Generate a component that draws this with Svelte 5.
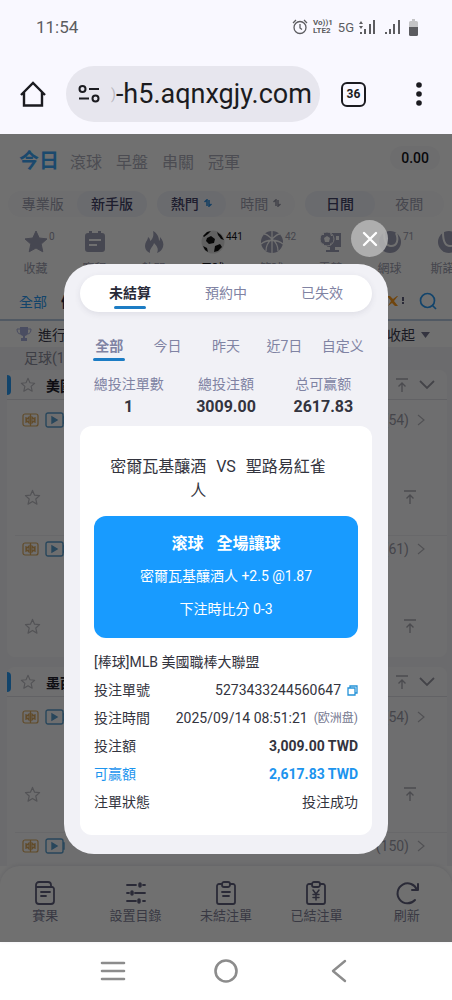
<script>
  const periods = ['今日', '滾球', '早盤', '串關', '冠軍'];
  const switches = [
    [{ text: '專業版' }, { text: '新手版', on: true }],
    [{ text: '熱門', on: true, sort: true }, { text: '時間', sort: true }],
    [{ text: '日間', on: true }, { text: '夜間' }],
  ];
  const sports = [
    { icon: 'star', label: '收藏', count: '0' },
    { icon: 'list', label: '賽程' },
    { icon: 'fire', label: '熱門' },
    { icon: 'soccer', label: '足球', count: '441', on: true },
    { icon: 'basket', label: '籃球', count: '42' },
    { icon: 'esport', label: '電競' },
    { icon: 'tennis', label: '網球', count: '71' },
    { icon: 'tennis', label: '斯諾克' },
  ];
  const leagues = [
    { name: '美國', matches: ['(54)', '(61)'] },
    { name: '墨西哥', matches: ['(54)', '(150)'] },
  ];
  const menu = [
    { icon: 'result', label: '賽果' },
    { icon: 'sliders', label: '設置目錄' },
    { icon: 'open', label: '未結注單' },
    { icon: 'settled', label: '已結注單' },
    { icon: 'refresh', label: '刷新' },
  ];
  const betTabs = ['未結算', '預約中', '已失效'];
  const ranges = ['全部', '今日', '昨天', '近7日', '自定义'];
  const totals = [
    { label: '總投注單數', value: '1' },
    { label: '總投注額', value: '3009.00' },
    { label: '总可赢额', value: '2617.83' },
  ];

  let betTab = $state(0);
  let range = $state(0);
  let open = $state(true);
</script>

{#snippet star(size)}
  <svg width={size} height={size} viewBox="0 0 18 18" fill="none" stroke="#bdbdc4" stroke-width="1.3" stroke-linejoin="round">
    <path d="M9 1.5l2.2 5 5.3.5-4 3.6 1.2 5.4L9 13.2 4.3 16l1.2-5.4-4-3.6 5.3-.5z" />
  </svg>
{/snippet}

{#snippet toTop()}
  <svg width="14" height="16" viewBox="0 0 14 16" fill="none" stroke="#acacb4" stroke-width="1.4">
    <path d="M1 2h12M7 15V6M3.5 9.5L7 6l3.5 3.5" />
  </svg>
{/snippet}

{#snippet sportIcon(name)}
  <svg width="26" height="26" viewBox="0 0 26 26" fill="#a0a1b8">
    {#if name === 'star'}
      <path d="M13 2l3.2 7 7.8.9-5.800 5.200 1.600 7.700L13 19l-6.800 3.800 1.600-7.700L2 9.900 9.800 9z" stroke="#a0a1b8" stroke-linejoin="round" />
    {:else if name === 'list'}
      <path fill-rule="evenodd" d="M7 2h3v2h6V2h3v2h1a3 3 0 0 1 3 3v13a3 3 0 0 1-3 3H6a3 3 0 0 1-3-3V7a3 3 0 0 1 3-3h1zM7 10v2h12v-2zM7 15v2h8v-2z" />
    {:else if name === 'fire'}
      <path d="M9 24C4 22 3 17 5 13c1-2 2-3 2-5 2 1 2 3 2 4 3-2 4-6 3-10 4 2 6 6 6 10 1-1 1-2 1-4 3 3 4 7 3 10s-3 5-6 6c2-4 0-7-3-10-1 4-5 6-4 10z" />
    {:else if name === 'soccer'}
      <circle cx="13" cy="13" r="11.5" fill="#ddd" />
      <path fill="#111" d="M7 9l4-2 4 3-1 4-5 1-3-3zM3 7l4-4 4-1-3 3-4 3zM17 3l4 3 3 5-3-1-3-4zM15 17l5-2 2 3-4 4-4 1zM3 17l4 2 1 4-3-2z" />
    {:else if name === 'basket'}
      <circle cx="13" cy="13" r="11" />
      <path d="M13 2v22M13 10C10 7 7 5 5 5M13 10c3-3 6-5 8-5M2 15c6-5 16-5 22 0M7 22c0-5 2-9 6-12 4 3 6 7 6 12" fill="none" stroke="#fff" stroke-width="1.3" />
    {:else if name === 'esport'}
      <path fill-rule="evenodd" d="M9 4h14v14h-6v3h4v2H8v-2h4v-3H9zM18 7v4h3V7z" />
      <circle cx="9" cy="10" r="7" stroke="#fff" />
      <path d="M6 9l3-2 3 2-1 4H7zM3 6l3-2v2zM12 4l3 3h-2zM4 14l2 1v2zM14 13l-2 2v2z" fill="#fff" />
    {:else}
      <circle cx="13" cy="13" r="11" />
      <path d="M7 3c0 6 1 14 7 14s8-6 5-13" fill="none" stroke="#fff" stroke-width="2" />
    {/if}
  </svg>
{/snippet}

{#snippet menuIcon(name)}
  <svg width="26" height="26" viewBox="0 0 26 26" fill="none" stroke="#61617d" stroke-width="1.8" stroke-linecap="round" stroke-linejoin="round">
    {#if name === 'result'}
      <path d="M4 7v14a3 3 0 0 0 3 3h12a3 3 0 0 0 3-3V9a2 2 0 0 0-2-2zM4 7V5a3 3 0 0 1 3-3h9a3 3 0 0 1 3 3v2M9 12h9M9 16h5" />
    {:else if name === 'sliders'}
      <path d="M4 5h9M20 5h2M4 13h2M12 13h10M4 21h9M20 21h2" />
      <path d="M17 4v2M9 12v2M16 20v2" stroke-width="3.5" />
    {:else if name === 'refresh'}
      <path d="M24 4v6h-6M23 10A10 10 0 1 0 21 20" stroke-width="2" />
    {:else}
      <path d="M9 4H6a2 2 0 0 0-2 2v16a2 2 0 0 0 2 2h14a2 2 0 0 0 2-2V6a2 2 0 0 0-2-2h-3" />
      <rect x="9" y="2" width="8" height="5" rx="2" />
      {#if name === 'open'}
        <path d="M9 12h8M10 16h6" />
      {:else}
        <path d="M10 10l3 4 3-4M13 14v6M10 14.5h6M10 17.5h6" stroke-width="1.5" />
      {/if}
    {/if}
  </svg>
{/snippet}

<div class="screen">
  <div class="status">
    <time>11:54</time>
    <div class="signals">
      <svg width="16" height="16" viewBox="0 0 16 16" fill="none" stroke="#5c5c60" stroke-width="1.3">
        <circle cx="8" cy="8.5" r="6" />
        <path d="M8 5v4l2 1.5M1 4l3-3M15 4l-3-3" />
      </svg>
      <span class="lte"><span>Vo))1</span><span>LTE2</span></span>
      <span class="net">5G</span>
      <svg class="bars" width="17" height="16" viewBox="0 0 17 16" fill="#5c5c60">
        <path d="M2 2l2 3H0zM0 7h4l-2 3zM1 13h2v2H1zM5 10h2v5H5zM10 5h2v10h-2zM14 1h2v14h-2z" />
      </svg>
      <svg class="bars" width="17" height="16" viewBox="0 0 17 16" fill="#5c5c60">
        <path d="M1 13h2v2H1zM5 10h2v5H5zM9 5h2v10H9zM14 1h2v14h-2z" />
      </svg>
      <svg width="9" height="17" viewBox="0 0 9 17">
        <path d="M3 0h3v2h1.500A1.500 1.500 0 0 1 9 3.500V9H0V3.500A1.500 1.500 0 0 1 1.500 2H3z" fill="#c4c4c6" />
        <path d="M0 8h9v7.500A1.500 1.500 0 0 1 7.500 17h-6A1.500 1.500 0 0 1 0 15.500z" fill="#5c5c60" />
      </svg>
    </div>
  </div>

  <div class="browser">
    <button class="home" aria-label="Home">
      <svg width="26" height="26" viewBox="0 0 26 26" fill="none" stroke="#1b1b20" stroke-width="2.4">
        <path d="M1 14L13 2l12 12M4 11.5v13h18v-13" />
      </svg>
    </button>
    <label class="address">
      <svg width="22" height="18" viewBox="0 0 22 18" fill="none" stroke="#1b1b20" stroke-width="2">
        <circle cx="4.5" cy="4" r="3" />
        <path d="M11 4h10M1 13.5h10" />
        <circle cx="17.5" cy="13.500" r="3" />
      </svg>
      <span class="faded">)</span>
      <input type="text" aria-label="Address" value="-h5.aqnxgjy.com" />
    </label>
    <button class="tabcount">36</button>
    <button class="more" aria-label="More">
      <svg width="6" height="24" viewBox="0 0 6 24" fill="#1b1b20">
        <circle cx="3" cy="3" r="2.8" /><circle cx="3" cy="12" r="2.8" /><circle cx="3" cy="21" r="2.8" />
      </svg>
    </button>
  </div>

  <div class="site">
    <header class="top">
      {#each periods as period, i}
        <button class:active={i === 0}>{period}</button>
      {/each}
      <span class="balance">0.00</span>
    </header>

    <div class="switches">
      {#each switches as group}
        <div class="switch">
          {#each group as option}
            <button class:active={option.on}>
              {option.text}
              {#if option.sort}
                <svg width="8" height="8" viewBox="0 0 8 8" fill="none" stroke={option.on ? '#2b8ede' : '#9697a8'} stroke-width="1.5">
                  <path d="M.5 3L3 .8V7M7.500 5L5 7.200V1" />
                </svg>
              {/if}
            </button>
          {/each}
        </div>
      {/each}
    </div>

    <div class="sports">
      {#each sports as sport}
        <button class:active={sport.on}>
          {@render sportIcon(sport.icon)}
          {#if sport.count}<sup>{sport.count}</sup>{/if}
          <span>{sport.label}</span>
        </button>
      {/each}
    </div>

    <div class="scopes">
      <button class="active">全部</button>
      <button>優選</button>
      <div class="tools">
        <svg width="18" height="12" viewBox="0 0 18 12" fill="#ff9d1e">
          <path d="M0 1h3l3 3 4-3h1L7 6l4 5H8L5 8l-4 3 3-5z" />
          <path d="M15 2h2v4h-2zM15 7h2v2h-2z" fill="#61617d" />
        </svg>
        <button aria-label="搜尋">
          <svg width="18" height="18" viewBox="0 0 18 18" fill="none" stroke="#2b9bf4" stroke-width="1.7">
            <circle cx="8.5" cy="8.5" r="7" /><path d="M13 13l4 4" />
          </svg>
        </button>
      </div>
    </div>

    <div class="running">
      <svg width="16" height="16" viewBox="0 0 16 16" fill="#a9b0de">
        <path d="M4 1h8v5a4 4 0 0 1-3 4v2h2v3H5v-3h2v-2a4 4 0 0 1-3-4z" />
        <path d="M4 3H1c0 3 1 5 4 5M12 3h3c0 3-1 5-4 5" fill="none" stroke="#a9b0de" />
      </svg>
      <span>進行中</span>
      <button>收起
        <svg width="9" height="7" viewBox="0 0 9 7"><path d="M0 1h9L4.500 7z" fill="#777891" /></svg>
      </button>
    </div>

    <main class="list">
      <h2>足球(189)</h2>
      {#each leagues as league}
        <section class="league">
          <header>
            {@render star(16)}
            <b>{league.name}</b>
            {@render toTop()}
            <svg width="16" height="10" viewBox="0 0 16 10" fill="none" stroke="#9a9aa5" stroke-width="1.8"><path d="M1 1l7 7 7-7" /></svg>
          </header>
          {#each league.matches as count}
            <article>
              <div class="info">
                <svg width="17" height="14" viewBox="0 0 17 14" fill="none" stroke="#dcab60" stroke-width="1.2">
                  <rect x="1" y="1" width="15" height="12" rx="2" />
                  <path d="M8.500 1v12M4 4v6M13 4v6M4 7l3-3v6zM13 7l-3-3v6z" />
                </svg>
                <svg width="20" height="16" viewBox="0 0 20 16" fill="none" stroke="#5b9fd0" stroke-width="1.4">
                  <rect x="1" y="1" width="17" height="14" rx="2" />
                  <path d="M7 5v6l5-3z" fill="#5b9fd0" /><path d="M18 5h1v6h-1" />
                </svg>
                <a href="#odds">{count}
                  <svg width="8" height="12" viewBox="0 0 8 12" fill="none" stroke="#b8b8bf" stroke-width="1.2"><path d="M1 1l6 5-6 5" /></svg>
                </a>
              </div>
              <div class="marks">{@render star(17)}{@render toTop()}</div>
            </article>
          {/each}
        </section>
      {/each}
    </main>

    <nav class="menu">
      {#each menu as item}
        <a href="#{item.icon}">{@render menuIcon(item.icon)}<span>{item.label}</span></a>
      {/each}
    </nav>

    {#if open}
      <div class="overlay">
        <div class="popup">
          <button class="close" aria-label="關閉" onclick={() => (open = false)}>
            <svg width="16" height="16" viewBox="0 0 16 16" stroke="#fff" stroke-width="2.4" stroke-linecap="round"><path d="M2 2l12 12M14 2L2 14" /></svg>
          </button>
          <div class="dialog" role="dialog" aria-label="注單">
            <div class="bet-tabs">
              {#each betTabs as tab, i}
                <button class:active={betTab === i} onclick={() => (betTab = i)}>{tab}</button>
              {/each}
            </div>
            <div class="ranges">
              {#each ranges as item, i}
                <button class:active={range === i} onclick={() => (range = i)}>{item}</button>
              {/each}
            </div>
            <dl class="totals">
              {#each totals as total}
                <div><dt>{total.label}</dt><dd>{total.value}</dd></div>
              {/each}
            </dl>

            <div class="bet">
              <div class="teams">
                <span class="home-team">密爾瓦基釀酒人</span>
                <span>VS</span>
                <span class="away-team">聖路易紅雀</span>
              </div>
              <div class="pick">
                <strong><span>滚球</span><span>全場讓球</span></strong>
                <p>密爾瓦基釀酒人 +2.5 @1.87</p>
                <p>下注時比分 0-3</p>
              </div>
              <p class="event">[棒球]MLB 美國職棒大聯盟</p>
              <dl class="details">
                <div>
                  <dt>投注單號</dt>
                  <dd>5273433244560647
                    <button class="copy" aria-label="複製">
                      <svg width="11" height="11" viewBox="0 0 11 11" fill="none" stroke="#2492d8" stroke-width="1.3"><path d="M1 3h7v7H1zM3 3V1h7v7H8" /></svg>
                    </button>
                  </dd>
                </div>
                <div><dt>投注時間</dt><dd>2025/09/14 08:51:21 <small>(欧洲盘)</small></dd></div>
                <div class="bold"><dt>投注額</dt><dd>3,009.00 TWD</dd></div>
                <div class="bold win"><dt>可贏額</dt><dd>2,617.83 TWD</dd></div>
                <div><dt>注單狀態</dt><dd>投注成功</dd></div>
              </dl>
            </div>
          </div>
        </div>
      </div>
    {/if}
  </div>

  <div class="system">
    <button aria-label="Recents">
      <svg width="26" height="20" viewBox="0 0 26 20" stroke="#8c8c8c" stroke-width="2.6" stroke-linecap="round"><path d="M2 2h22M2 10h22M2 18h22" /></svg>
    </button>
    <button aria-label="Home screen">
      <svg width="26" height="26" viewBox="0 0 26 26" fill="none" stroke="#8c8c8c" stroke-width="2.6"><circle cx="13" cy="13" r="10.5" /></svg>
    </button>
    <button aria-label="Back">
      <svg width="16" height="24" viewBox="0 0 16 24" fill="none" stroke="#8c8c8c" stroke-width="2.4" stroke-linecap="round" stroke-linejoin="round"><path d="M14 2L2 12l12 10" /></svg>
    </button>
  </div>
</div>

<style>
  :global(body) {
    margin: 0;
    background: #fff;
  }

  .screen {
    display: flex;
    flex-direction: column;
    height: 100vh;
    overflow: hidden;
    font-family: Roboto, 'Noto Sans CJK TC', sans-serif;
    font-size: 14px;
    color: #33343e;
  }

  .screen * {
    box-sizing: border-box;
  }

  svg {
    display: block;
    flex: none;
  }

  button {
    padding: 0;
    border: none;
    background: none;
    font: inherit;
    color: inherit;
    white-space: nowrap;
  }

  a {
    color: inherit;
    text-decoration: none;
  }

  p,
  dl,
  dd,
  h2 {
    margin: 0;
  }

  /* phone and browser bars */
  .status {
    display: flex;
    align-items: center;
    justify-content: space-between;
    height: 54px;
    padding: 0 34px 0 36px;
    background: #f9f8ff;
    color: #5c5c60;
  }

  .status time {
    font-size: 17px;
  }

  .signals {
    display: flex;
    align-items: center;
    gap: 5px;
  }

  .lte {
    display: flex;
    flex-direction: column;
    font-size: 8px;
    font-weight: 700;
    line-height: 8px;
  }

  .net {
    font-size: 13px;
  }

  .bars + .bars {
    margin: 0 3px;
  }

  .browser {
    display: flex;
    align-items: center;
    height: 80px;
    padding: 0 30px 0 20px;
    background: #f9f8ff;
    color: #1b1b20;
  }

  .address {
    display: flex;
    flex: 1;
    align-items: center;
    min-width: 0;
    height: 56px;
    margin: 0 21px 0 20px;
    padding: 0 8px 0 12px;
    border-radius: 28px;
    background: #e7e6ee;
  }

  .faded {
    margin-left: 11px;
    color: #b9b8c0;
  }

  .address input {
    flex: 1;
    min-width: 0;
    padding: 0;
    border: none;
    outline: none;
    background: none;
    font-family: Roboto, sans-serif;
    font-size: 27px;
    color: inherit;
  }

  .tabcount {
    width: 25px;
    height: 25px;
    margin-right: 50px;
    border: 2px solid #1b1b20;
    border-radius: 6px;
    font-size: 12px;
    font-weight: 700;
  }

  /* betting site */
  .site {
    position: relative;
    display: flex;
    flex: 1;
    flex-direction: column;
    min-height: 0;
    background: #fff;
  }

  .top {
    display: flex;
    align-items: center;
    gap: 14px;
    height: 54px;
    padding: 0 12px 0 19px;
    font-size: 16px;
    color: #adaebb;
  }

  .top .active {
    margin-right: -3px;
    padding-bottom: 4px;
    font-size: 20px;
    font-weight: 700;
    color: #3ea6f8;
  }

  .balance {
    margin: 0 0 6px auto;
    padding: 0 11px;
    border-radius: 12px;
    background: #f9f9fb;
    font-weight: 500;
    font-size: 14px;
    line-height: 24px;
    color: #15151c;
  }

  .switches {
    display: flex;
    gap: 10px;
    padding: 3px 8px 0;
  }

  .switch {
    display: flex;
    flex: 1;
    border-radius: 13px;
    background: #fafafc;
  }

  .switch button {
    display: flex;
    flex: 1;
    align-items: center;
    justify-content: center;
    gap: 5px;
    height: 26px;
    border-radius: 13px;
    padding-bottom: 2px;
    color: #a0a1b2;
  }

  .switch .active {
    background: #f2f3fb;
    font-weight: 500;
    color: #44446a;
  }

  .sports {
    display: flex;
    height: 66px;
    padding: 12px 0 0 6px;
    overflow: hidden;
    font-size: 12px;
    color: #9c9dae;
  }

  .sports button {
    position: relative;
    display: flex;
    flex: none;
    flex-direction: column;
    align-items: center;
    gap: 4px;
    width: 59px;
  }

  .sports sup {
    position: absolute;
    top: 0;
    left: 43px;
    font-size: 10px;
    line-height: 16px;
  }

  .sports .active {
    color: #15151c;
  }

  .scopes {
    display: flex;
    align-items: center;
    gap: 14px;
    height: 38px;
    padding: 0 15px 0 19px;
    border-bottom: 2px solid #b9cbe2;
    color: #2c2c4a;
    font-weight: 700;
  }

  .scopes .active {
    font-weight: 400;
    color: #2b9bf4;
  }

  .tools {
    display: flex;
    align-items: center;
    gap: 14px;
    margin-left: auto;
  }

  .running {
    display: flex;
    align-items: center;
    gap: 6px;
    height: 26px;
    padding: 0 22px 0 16px;
    color: #3c3c4e;
  }

  .running button {
    display: flex;
    align-items: center;
    gap: 6px;
    margin-left: auto;
  }

  .list {
    flex: 1;
    min-height: 0;
    overflow: hidden;
    padding: 0 5px 0 7px;
    background: #f4f4f7;
  }

  .list h2 {
    padding-left: 17px;
    font-size: 14px;
    font-weight: 400;
    line-height: 23px;
    color: #8c8d9e;
  }

  .league {
    margin-bottom: 10px;
    border-radius: 8px;
    background: #fbfbfd;
  }

  .league header {
    display: flex;
    align-items: center;
    gap: 10px;
    height: 30px;
    padding-right: 12px;
    border-bottom: 1px solid #e0e0e6;
    color: #20202c;
  }

  .league header::before {
    width: 4px;
    height: 20px;
    margin-right: -1px;
    border-radius: 0 4px 4px 0;
    background: #2b9bf4;
    content: '';
  }

  .league header b {
    flex: 1;
  }

  .league article {
    height: 128px;
    margin-left: 8px;
  }

  .league header + article {
    height: 135px;
    padding-top: 7px;
  }

  .league article:last-child {
    height: 122px;
    border-top: 1px solid #ececf1;
  }

  .info {
    display: flex;
    align-items: center;
    gap: 6px;
    height: 26px;
    padding: 0 22px 0 7px;
  }

  .info a {
    display: flex;
    align-items: center;
    gap: 8px;
    margin-left: auto;
    color: #9e9eab;
  }

  .marks {
    display: flex;
    justify-content: space-between;
    padding: 56px 30px 0 9px;
  }

  .menu {
    display: grid;
    grid-template-columns: repeat(5, 1fr);
    height: 76px;
    padding-top: 14px;
    border-radius: 20px 20px 0 0;
    background: #fff;
    box-shadow: 0 -1px 4px #e4e4ea;
    font-size: 13px;
    line-height: 20px;
    color: #83839a;
  }

  .menu a {
    display: flex;
    flex-direction: column;
    align-items: center;
  }

  /* bet slip */
  .overlay {
    position: absolute;
    inset: 0;
    display: flex;
    align-items: center;
    justify-content: center;
    padding-bottom: 2px;
    background: rgba(0, 0, 0, 0.56);
  }

  .popup {
    display: flex;
    flex-direction: column;
    gap: 7px;
    width: 100%;
    padding: 0 64px;
  }

  .close {
    display: flex;
    align-items: center;
    align-self: flex-end;
    justify-content: center;
    width: 37px;
    height: 37px;
    border-radius: 50%;
    background: rgba(185, 185, 185, 0.85);
  }

  .dialog {
    padding: 11px 16px 19px;
    border-radius: 30px;
    background: #f1f1f6;
    color: #33343e;
  }

  .bet-tabs,
  .ranges {
    display: flex;
    color: #8083a3;
  }

  .bet-tabs {
    padding: 0 2px;
    border-radius: 19px;
    background: #fff;
    box-shadow: 0 2px 6px rgba(60, 60, 90, 0.1);
  }

  .bet-tabs button,
  .ranges button {
    position: relative;
    flex: 1;
    padding-bottom: 4px;
  }

  .bet-tabs button {
    height: 37px;
  }

  .ranges button {
    height: 28px;
  }

  .ranges {
    margin-top: 21px;
  }

  .bet-tabs .active,
  .ranges .active {
    font-weight: 700;
  }

  .bet-tabs .active {
    color: #282a38;
  }

  .bet-tabs .active::after,
  .ranges .active::after {
    position: absolute;
    bottom: 0;
    left: 50%;
    width: 32px;
    height: 3px;
    margin-left: -16px;
    border-radius: 2px;
    background: #1c7cc4;
    content: '';
  }

  .bet-tabs .active::after {
    bottom: 3px;
  }

  .totals {
    display: grid;
    grid-template-columns: repeat(3, 1fr);
    margin: 11px 0 8px;
    text-align: center;
  }

  .totals dt {
    line-height: 24px;
    color: #8083a3;
  }

  .totals dd {
    font-size: 16px;
    font-weight: 700;
    line-height: 22px;
  }

  .bet {
    padding: 29px 14px 19px;
    border-radius: 12px;
    background: #fff;
  }

  .teams {
    display: flex;
    gap: 10px;
    font-size: 16px;
    line-height: 24px;
  }

  .home-team,
  .away-team {
    flex: 1;
  }

  .home-team {
    padding-left: 12px;
    text-align: right;
  }

  .away-team {
    padding-right: 12px;
  }

  .pick {
    margin: 13px 0 10px;
    padding: 11px 0 12px;
    border-radius: 12px;
    background: #189bff;
    line-height: 33px;
    text-align: center;
    color: #fff;
  }

  .pick strong {
    display: flex;
    justify-content: center;
    gap: 13px;
    font-size: 16px;
  }

  .event,
  .details div {
    line-height: 28px;
  }

  .details div,
  .details dd {
    display: flex;
    align-items: center;
  }

  .details div {
    justify-content: space-between;
  }

  .details dd {
    gap: 6px;
  }

  .details small {
    font-size: 12px;
    color: #74778f;
  }

  .bold dd {
    font-weight: 700;
  }

  .win {
    color: #1c94ee;
  }

  .system {
    display: grid;
    grid-template-columns: repeat(3, 1fr);
    align-items: center;
    height: 58px;
    padding: 0 56px;
    background: #fff;
  }

  .system button {
    display: flex;
    justify-content: center;
  }
</style>
